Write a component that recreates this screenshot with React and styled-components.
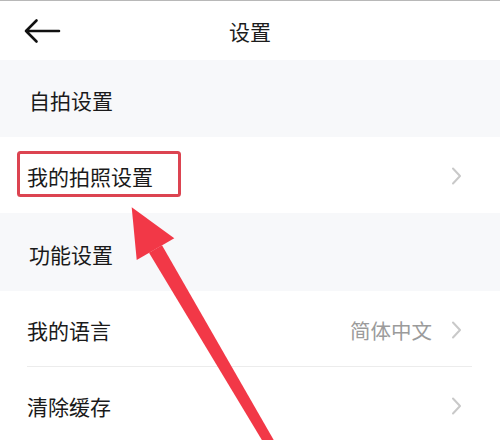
import React from "react";
import styled, { createGlobalStyle } from "styled-components";

const GlobalStyle = createGlobalStyle`
  html, body { margin: 0; padding: 0; background: #ffffff; }
  body {
    font-family: "Noto Sans CJK SC", "Noto Sans", sans-serif;
    color: #222222;
    -webkit-font-smoothing: antialiased;
  }
`;

const Page = styled.div`
  position: relative;
  width: 500px;
  height: 440px;
  overflow: hidden;
  background: #ffffff;
  border-top: 1px solid #b8b8b8;
  box-sizing: border-box;
`;

const Header = styled.header`
  height: 59px;
  display: grid;
  grid-template-columns: 90px 1fr 90px;
  align-items: center;
  background: #ffffff;
`;

const BackButton = styled.div`
  display: flex;
  align-items: center;
  padding-left: 24px;
  height: 100%;
`;

const Title = styled.h1`
  margin: 0;
  text-align: center;
  font-size: 21px;
  font-weight: 400;
  line-height: 1;
  color: #1c1c1c;
  padding-top: 2px;
`;

const SectionHeader = styled.div`
  height: ${(p) => p.$h}px;
  display: flex;
  align-items: center;
  padding: 3px 0 0 29px;
  box-sizing: border-box;
  background: #f7f8fa;
  font-size: 21px;
  color: #1a1a1a;
`;

const Row = styled.div`
  height: ${(p) => p.$h}px;
  display: flex;
  align-items: center;
  padding: 2px 38px 0 27px;
  box-sizing: border-box;
  background: #ffffff;
`;

const Label = styled.span`
  flex: 1;
  font-size: 21px;
  color: #1a1a1a;
  white-space: nowrap;
`;

const Value = styled.span`
  font-size: 20.5px;
  color: #9b9b9b;
  margin-right: 19px;
`;

const Divider = styled.div`
  height: 1px;
  background: #ececec;
  margin: 0 28px 0 27px;
`;

const Overlay = styled.svg`
  position: absolute;
  left: 0;
  top: -1px;
  width: 500px;
  height: 440px;
  pointer-events: none;
`;

const Chevron = () => (
  <svg width="11" height="18" viewBox="0 0 11 18" aria-hidden>
    <path d="M2 1.5 L9 9 L2 16.5" fill="none" stroke="#c9c9c9" strokeWidth="2" strokeLinecap="round" strokeLinejoin="round" />
  </svg>
);

const BackArrow = () => (
  <svg width="38" height="26" viewBox="0 0 38 26" aria-hidden>
    <path d="M2 13 H35 M12.5 2.5 L2 13 L12.5 23.5" fill="none" stroke="#111" strokeWidth="2.6" strokeLinecap="round" strokeLinejoin="round" />
  </svg>
);

export default function App() {
  return (
    <>
      <GlobalStyle />
      <Page>
        <Header>
          <BackButton>
            <BackArrow />
          </BackButton>
          <Title>设置</Title>
          <div />
        </Header>
        <SectionHeader $h={77}>自拍设置</SectionHeader>
        <Row $h={76}>
          <Label>我的拍照设置</Label>
          <Chevron />
        </Row>
        <SectionHeader $h={78}>功能设置</SectionHeader>
        <Row $h={75}>
          <Label>我的语言</Label>
          <Value>简体中文</Value>
          <Chevron />
        </Row>
        <Divider />
        <Row $h={75}>
          <Label>清除缓存</Label>
          <Chevron />
        </Row>
        <Overlay viewBox="0 0 500 440">
          <rect x="18.5" y="152.5" width="161" height="43" rx="2" fill="none" stroke="#dc4451" strokeWidth="3" />
          <polygon points="131.7,207.3 174.3,238.3 136.7,260" fill="#f23847" />
          <polygon points="162,245.2 149,252.7 269.6,452.8 278.2,447.8" fill="#f23847" />
        </Overlay>
      </Page>
    </>
  );
}
